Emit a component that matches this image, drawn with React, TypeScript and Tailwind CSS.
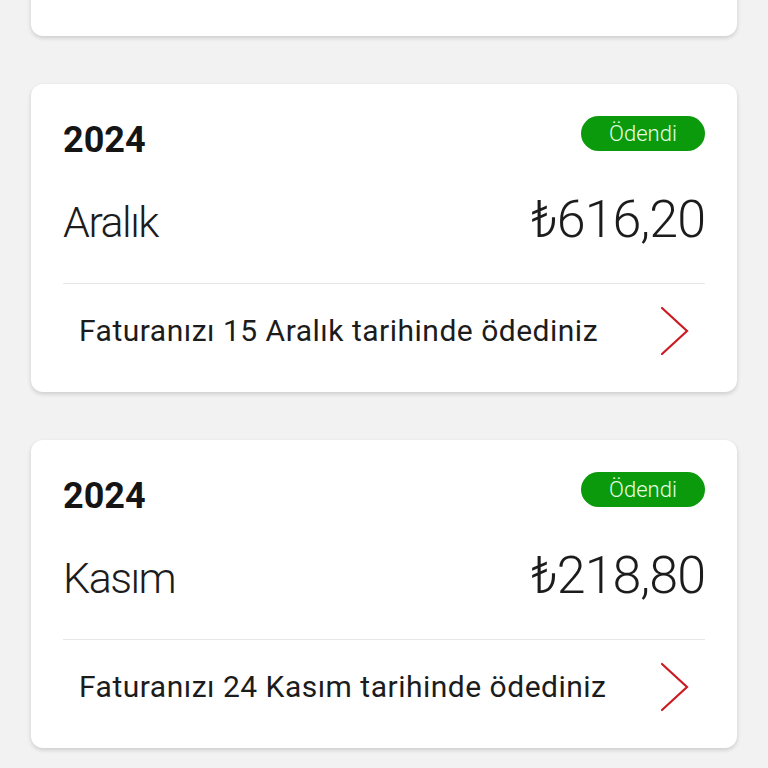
import React from "react";

type Bill = { year: string; month: string; amount: string; text: string };

const bills: Bill[] = [
  { year: "2024", month: "Aralık", amount: "₺616,20", text: "Faturanızı 15 Aralık tarihinde ödediniz" },
  { year: "2024", month: "Kasım", amount: "₺218,80", text: "Faturanızı 24 Kasım tarihinde ödediniz" },
];

function Chevron() {
  return (
    <svg width="30" height="52" viewBox="0 0 30 52" fill="none">
      <polyline points="3,3 28,26 3,49" stroke="#cc1a22" strokeWidth="2.2" strokeLinecap="round" strokeLinejoin="miter" />
    </svg>
  );
}

function Card({ bill }: { bill: Bill }) {
  return (
    <div className="h-[308px] rounded-[12px] bg-white px-8 pt-8 shadow-[0_2px_4px_rgba(0,0,0,0.16)]">
      <div className="flex items-start justify-between">
        <div className="mt-[6px] text-[36px] font-bold leading-none text-[#151515]" style={{ fontFamily: "Roboto, sans-serif" }}>
          {bill.year}
        </div>
        <div className="flex h-[35px] w-[124px] items-center justify-center rounded-full bg-[#0b9a0b] text-[22px] font-light leading-none text-[#e6ffe6]" style={{ fontFamily: "Roboto, sans-serif" }}>
          Ödendi
        </div>
      </div>
      <div className="mt-[36px] flex items-baseline justify-between text-[#1c1c1c]" style={{ fontFamily: "Roboto, sans-serif" }}>
        <div className="text-[43px] font-light leading-none tracking-[-1.5px]">{bill.month}</div>
        <div className="text-[52px] font-light leading-none tracking-[-1px]">{bill.amount}</div>
      </div>
      <div className="mt-[37px] h-px bg-[#e6e6e6]" />
      <div className="flex h-[94px] items-center justify-between px-4">
        <div className="text-[30px] leading-none tracking-[0.5px] text-[#1c1c1c]" style={{ fontFamily: "Roboto, sans-serif" }}>
          {bill.text}
        </div>
        <Chevron />
      </div>
    </div>
  );
}

export default function App() {
  return (
    <div className="h-[768px] w-[768px] overflow-hidden bg-[#f2f2f2] px-[31px]">
      <div className="-mt-[272px] flex flex-col gap-[48px]">
        <div className="h-[308px] rounded-[12px] bg-white shadow-[0_2px_4px_rgba(0,0,0,0.16)]" />
        {bills.map((b, i) => (
          <Card key={i} bill={b} />
        ))}
      </div>
    </div>
  );
}
